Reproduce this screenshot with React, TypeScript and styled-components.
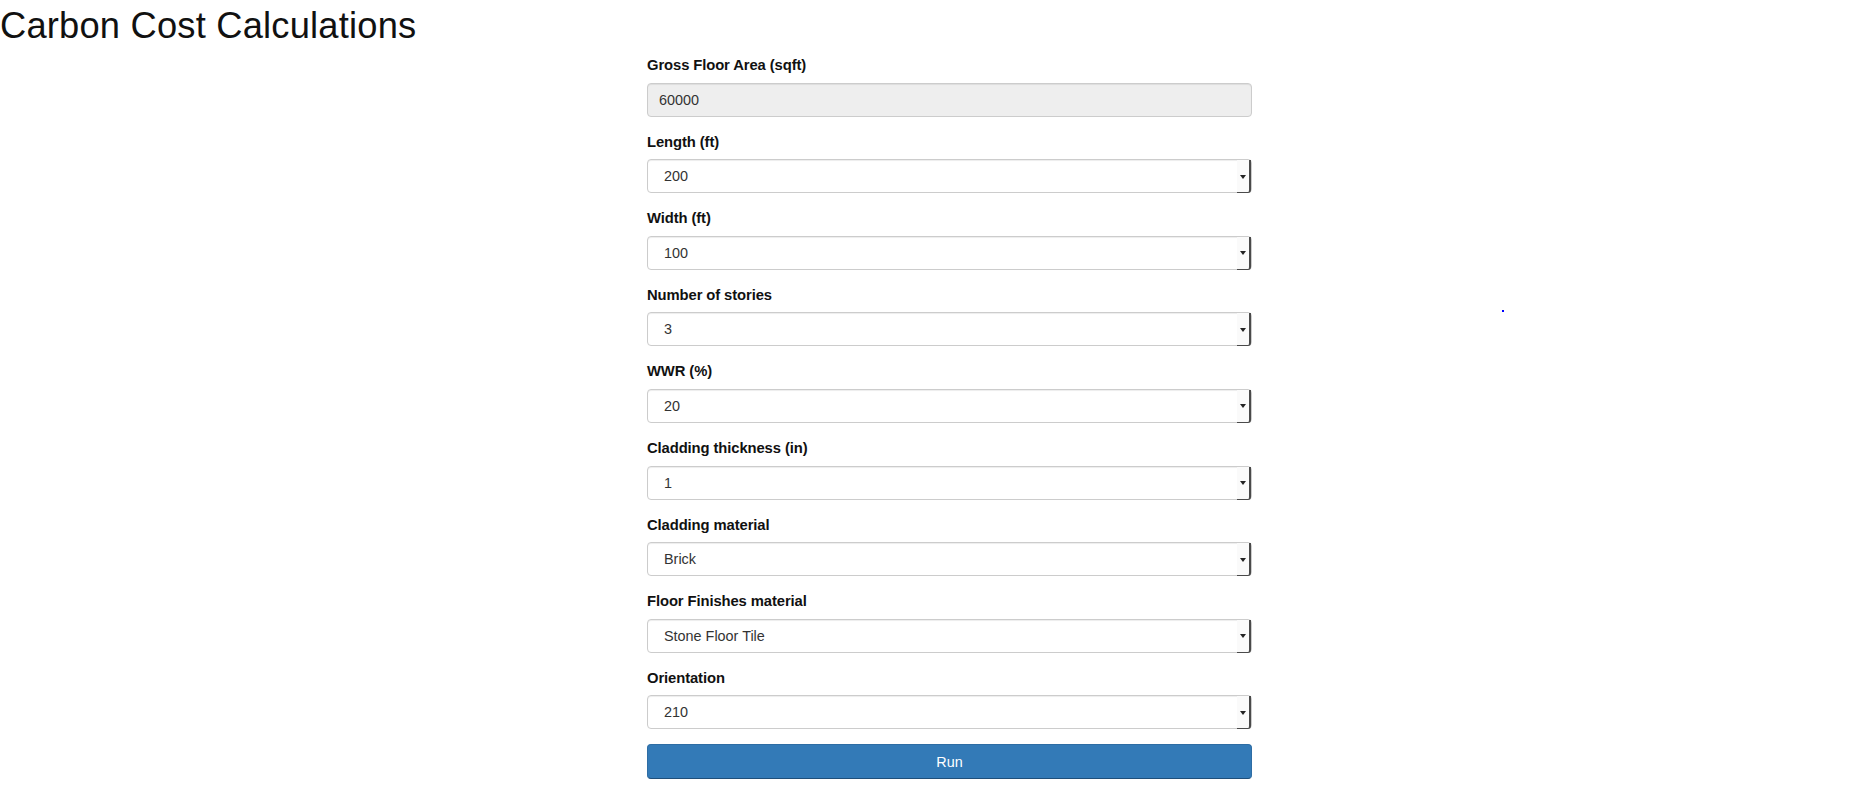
import React from "react";
import styled, { createGlobalStyle } from "styled-components";

const GlobalStyle = createGlobalStyle`
  html, body { margin: 0; padding: 0; background: #fff; }
  body {
    font-family: "Liberation Sans", Arial, Helvetica, sans-serif;
    font-size: 14px;
    line-height: 1.42857;
    color: #333;
  }
  * { box-sizing: border-box; }
`;

const Page = styled.div`
  position: relative;
  width: 1876px;
  min-height: 808px;
`;

const Title = styled.h1`
  margin: 0;
  padding-top: 6px;
  font-family: "Liberation Sans", Arial, sans-serif;
  font-size: 36.3px;
  font-weight: 400;
  line-height: 40px;
  color: #111;
  letter-spacing: 0.2px;
`;

const Main = styled.main`
  display: grid;
  grid-template-columns: 647px 605px 1fr;
  padding-top: 9px;
`;

const Form = styled.form`
  grid-column: 2;
  display: flex;
  flex-direction: column;
`;

const Group = styled.div`
  display: flex;
  flex-direction: column;
  margin-bottom: 15px;
`;

const Label = styled.label`
  font-weight: 700;
  font-size: 14.8px;
  line-height: 20.6px;
  margin-bottom: 7px;
  color: #111;
  letter-spacing: -0.1px;
`;

const TextInput = styled.input`
  height: 34px;
  width: 100%;
  padding: 6px 12px 6px 11px;
  font-family: "Liberation Sans", Arial, sans-serif;
  font-size: 14.4px;
  color: #333;
  background: #eee;
  border: 1px solid #ccc;
  border-radius: 4px;
  box-shadow: inset 0 1px 1px rgba(0, 0, 0, 0.075);
  outline: none;
`;

const SelectWrap = styled.div`
  position: relative;
  height: 34px;
`;

const Select = styled.select`
  appearance: none;
  -webkit-appearance: none;
  width: 100%;
  height: 34px;
  padding: 6px 20px 6px 16px;
  font-family: "Liberation Sans", Arial, sans-serif;
  font-size: 14.4px;
  color: #333;
  background: #fff;
  border: 1px solid #ccc;
  border-radius: 4px;
  box-shadow: inset 0 1px 1px rgba(0, 0, 0, 0.075);
  outline: none;
`;

const DropButton = styled.span`
  position: absolute;
  top: 1px;
  right: 1px;
  bottom: 0;
  width: 14px;
  border-right: 2px solid #4a4a4a;
  border-bottom: 1px solid #4a4a4a;
  border-bottom-right-radius: 3px;
  background: #fafafa;
  pointer-events: none;
  display: flex;
  align-items: center;
  justify-content: center;

  &::after {
    content: "";
    width: 0;
    height: 0;
    border-left: 3px solid transparent;
    border-right: 3px solid transparent;
    border-top: 4px solid #222;
    margin-top: 1px;
  }
`;

const RunButton = styled.button`
  height: 35px;
  width: 100%;
  font-family: "Liberation Sans", Arial, sans-serif;
  font-size: 14.4px;
  color: #fff;
  background: #337ab7;
  border: 1px solid #2e6da4;
  border-bottom-color: #1f4f7a;
  border-radius: 4px;
  cursor: pointer;
`;

const Dot = styled.span`
  position: absolute;
  left: 1502px;
  top: 310px;
  width: 2px;
  height: 2px;
  background: #0000ff;
`;

type Field = { label: string; value: string };

const fields: Field[] = [
  { label: "Length (ft)", value: "200" },
  { label: "Width (ft)", value: "100" },
  { label: "Number of stories", value: "3" },
  { label: "WWR (%)", value: "20" },
  { label: "Cladding thickness (in)", value: "1" },
  { label: "Cladding material", value: "Brick" },
  { label: "Floor Finishes material", value: "Stone Floor Tile" },
  { label: "Orientation", value: "210" },
];

export default function App() {
  return (
    <Page>
      <GlobalStyle />
      <Title>Carbon Cost Calculations</Title>
      <Main>
        <Form onSubmit={(e) => e.preventDefault()}>
          <Group>
            <Label>Gross Floor Area (sqft)</Label>
            <TextInput value="60000" disabled readOnly />
          </Group>
          {fields.map((f) => (
            <Group key={f.label}>
              <Label>{f.label}</Label>
              <SelectWrap>
                <Select defaultValue={f.value}>
                  <option value={f.value}>{f.value}</option>
                </Select>
                <DropButton />
              </SelectWrap>
            </Group>
          ))}
          <RunButton type="submit">Run</RunButton>
        </Form>
      </Main>
      <Dot />
    </Page>
  );
}
